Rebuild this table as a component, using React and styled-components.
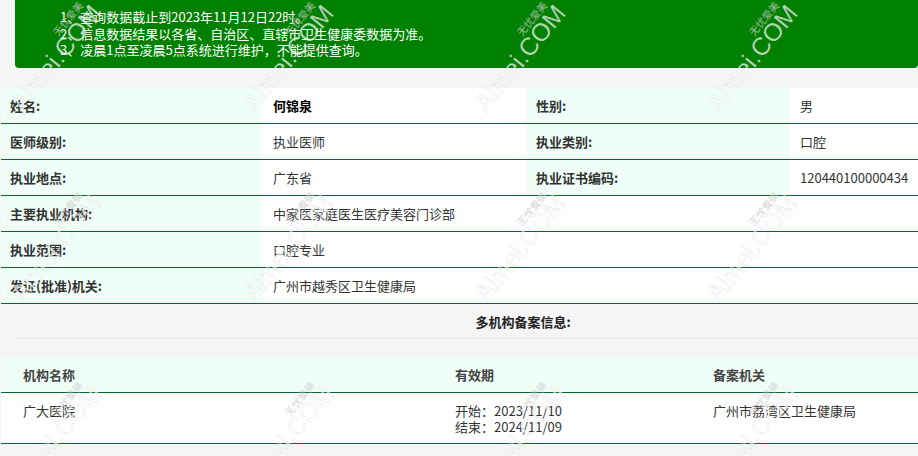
import React from 'react';
import styled, { createGlobalStyle } from 'styled-components';

const GlobalStyle = createGlobalStyle`
  body {
    margin: 0;
    background: #f5f5f5;
    font-family: "Noto Sans CJK SC", "Liberation Sans", sans-serif;
    font-size: 13px;
    color: #333;
  }
`;

const Page = styled.div`
  position: relative;
  min-height: 456px;
  overflow: hidden;
`;

const Notice = styled.ol`
  margin: 0 0 20px 15px;
  height: 68px;
  box-sizing: border-box;
  padding: 9px 0 0 45px;
  list-style: none;
  background: #008000;
  border-radius: 0 0 4px 4px;
  color: #fff;
  line-height: 16.5px;
`;

const InfoTable = styled.div`
  margin-left: 1px;
  background: #fff;
`;

const InfoRow = styled.div`
  display: grid;
  grid-template-columns: 262px 264px 263px 1fr;
  height: 36px;
  box-sizing: border-box;
  border-bottom: 1px solid #0d6435;
`;

const Cell = styled.div`
  display: flex;
  align-items: center;
  padding-left: ${(p) => (p.$label ? '9px' : '10px')};
  background: ${(p) => (p.$label ? '#effff7' : '#fff')};
  font-weight: ${(p) => (p.$label || p.$strong ? 700 : 400)};
  color: ${(p) => (p.$strong ? '#000' : '#333')};
  grid-column: ${(p) => (p.$wide ? 'span 3' : 'auto')};
`;

const SectionTitle = styled.div`
  margin-left: 13px;
  height: 35px;
  box-sizing: border-box;
  padding-left: 115px;
  display: flex;
  align-items: center;
  justify-content: center;
  border-bottom: 1px solid #e6e6e6;
  font-weight: 700;
  color: #222;
`;

const RecordTable = styled.div`
  margin: 18px 0 0 1px;
  background: #fff;
`;

const RecordRow = styled.div`
  display: grid;
  grid-template-columns: 432px 258px 1fr;
  box-sizing: border-box;
  height: ${(p) => (p.$head ? '36px' : '51px')};
  background: ${(p) => (p.$head ? '#effff7' : '#fff')};
  border-bottom: 1px solid #0d6435;
`;

const RecordCell = styled.div`
  padding: ${(p) => (p.$head ? '0 0 0 22px' : '10px 0 0 22px')};
  display: ${(p) => (p.$head ? 'flex' : 'block')};
  align-items: center;
  line-height: 16px;
  font-weight: ${(p) => (p.$head ? 700 : 400)};
  color: ${(p) => (p.$head ? '#444' : '#333')};
`;

// faint diagonal watermark layer laid over the whole page
const Watermarks = styled.div`
  position: absolute;
  top: -40px;
  left: -63px;
  display: grid;
  grid-template-columns: repeat(5, 232px);
  grid-auto-rows: 190px;
  pointer-events: none;
`;

const Mark = styled.div`
  display: flex;
  align-items: center;
  justify-content: center;
`;

const MarkText = styled.div`
  display: flex;
  flex-direction: column;
  align-items: flex-end;
  transform: rotate(-51deg);
  font-family: "Liberation Sans", sans-serif;
  color: rgba(255, 255, 255, 0.7);
  -webkit-text-stroke: 0.6px rgba(0, 0, 0, 0.13);
  line-height: 1;
`;

const MarkSmall = styled.span`
  font-family: "Noto Sans CJK SC", sans-serif;
  font-size: 10px;
  margin: 0 6px -2px 0;
`;

const MarkBig = styled.span`
  font-size: 25px;
`;

const notes = [
  '1、查询数据截止到2023年11月12日22时。',
  '2、信息数据结果以各省、自治区、直辖市卫生健康委数据为准。',
  '3、凌晨1点至凌晨5点系统进行维护，不能提供查询。',
];

const App = () => {
  return (
    <Page>
      <GlobalStyle />
      <Notice>
        {notes.map((n) => (
          <li key={n}>{n}</li>
        ))}
      </Notice>

      <InfoTable>
        <InfoRow>
          <Cell $label>姓名:</Cell>
          <Cell $strong>何锦泉</Cell>
          <Cell $label>性别:</Cell>
          <Cell>男</Cell>
        </InfoRow>
        <InfoRow>
          <Cell $label>医师级别:</Cell>
          <Cell>执业医师</Cell>
          <Cell $label>执业类别:</Cell>
          <Cell>口腔</Cell>
        </InfoRow>
        <InfoRow>
          <Cell $label>执业地点:</Cell>
          <Cell>广东省</Cell>
          <Cell $label>执业证书编码:</Cell>
          <Cell>120440100000434</Cell>
        </InfoRow>
        <InfoRow>
          <Cell $label>主要执业机构:</Cell>
          <Cell $wide>中家医家庭医生医疗美容门诊部</Cell>
        </InfoRow>
        <InfoRow>
          <Cell $label>执业范围:</Cell>
          <Cell $wide>口腔专业</Cell>
        </InfoRow>
        <InfoRow>
          <Cell $label>发证(批准)机关:</Cell>
          <Cell $wide>广州市越秀区卫生健康局</Cell>
        </InfoRow>
      </InfoTable>

      <SectionTitle>多机构备案信息:</SectionTitle>

      <RecordTable>
        <RecordRow $head>
          <RecordCell $head>机构名称</RecordCell>
          <RecordCell $head>有效期</RecordCell>
          <RecordCell $head>备案机关</RecordCell>
        </RecordRow>
        <RecordRow>
          <RecordCell>广大医院</RecordCell>
          <RecordCell>
            开始：2023/11/10
            <br />
            结束：2024/11/09
          </RecordCell>
          <RecordCell>广州市荔湾区卫生健康局</RecordCell>
        </RecordRow>
      </RecordTable>

      <Watermarks>
        {Array.from({ length: 15 }).map((_, i) => (
          <Mark key={i}>
            <MarkText>
              <MarkSmall>无忧爱美</MarkSmall>
              <MarkBig>Aimei.COM</MarkBig>
            </MarkText>
          </Mark>
        ))}
      </Watermarks>
    </Page>
  );
};

export default App;
